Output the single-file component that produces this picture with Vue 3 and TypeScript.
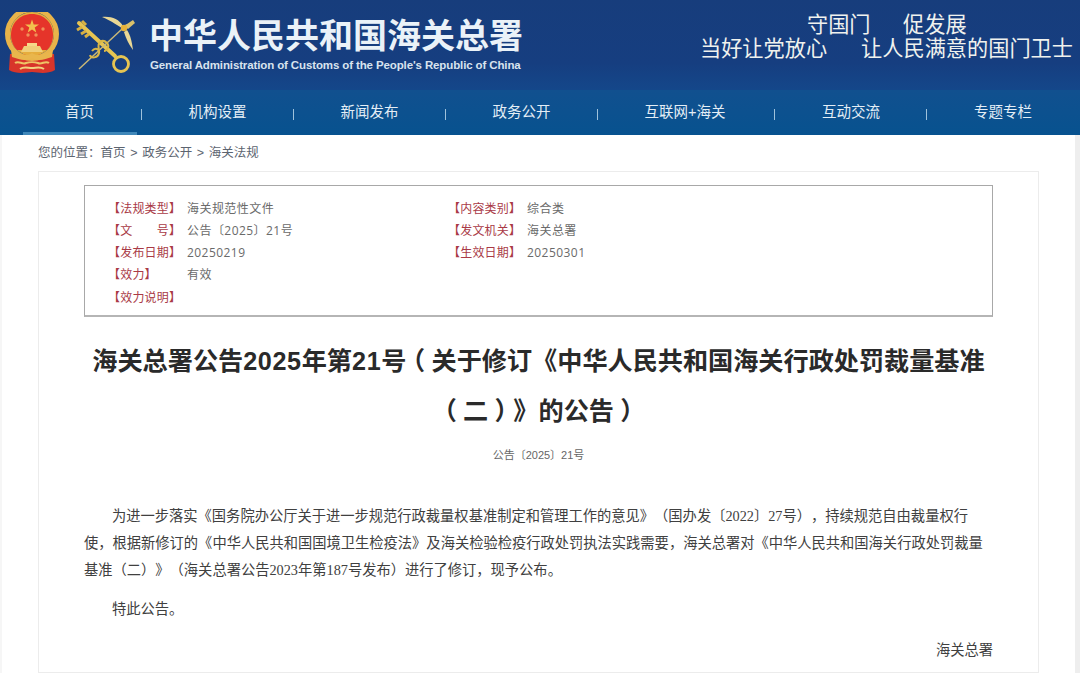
<script setup lang="ts">
const navItems: string[] = ['首页', '机构设置', '新闻发布', '政务公开', '互联网+海关', '互动交流', '专题专栏']
const metaLeft = [
  ['【法规类型】', '海关规范性文件'],
  ['【文　　号】', '公告〔2025〕21号'],
  ['【发布日期】', '20250219'],
  ['【效力】', '有效'],
  ['【效力说明】', ''],
]
const metaRight = [
  ['【内容类别】', '综合类'],
  ['【发文机关】', '海关总署'],
  ['【生效日期】', '20250301'],
]
</script>

<template>
  <div class="page">
    <header class="masthead">
      <svg class="emblem" width="60" height="64" viewBox="3 12 60 64">
        <path d="M10 54l-1 16c7 4 15 3 23 2 8 1 16 2 23-2l-1-16z" fill="#d8352a" />
        <circle cx="32" cy="34" r="22" fill="#e6ad3c" />
        <circle cx="32" cy="34" r="24.500" fill="none" stroke="#e8b44a" stroke-width="5" />
        <path d="M32 14c12 0 21 9 21 21 0 7-3 12-6 15H17c-3-3-6-8-6-15 0-12 9-21 21-21z" fill="#e5342a" />
        <path d="M32 19.500l1.700 5h5.300l-4.300 3.100 1.600 5-4.300-3.100-4.300 3.100 1.600-5-4.300-3.100h5.300z" fill="#f2c14e" />
        <circle cx="22" cy="29" r="1.700" fill="#f0905a" />
        <circle cx="43" cy="29" r="1.700" fill="#f0905a" />
        <circle cx="28" cy="35" r="1.700" fill="#f0905a" />
        <circle cx="36" cy="35" r="1.700" fill="#f0905a" />
        <path d="M27 43h10v3H27z" fill="#f6d98a" />
        <path d="M24 46h16l3 6H21z" fill="#f0cf7a" />
        <path d="M11 50c7 3 13 8 21 3 8 5 14 0 21-3l-1 7c-7 2-13 5-20 1-7 4-13 1-20-1z" fill="#e9b64c" />
        <path d="M15 63c4-3 7 2 11 0 3-1 9-1 12 0 4 2 7-3 11 0" fill="none" stroke="#eec566" stroke-width="2" />
        <path d="M20 69c4-3 8-1 12-1s8-2 12 1" fill="none" stroke="#f2d27f" stroke-width="2" />
      </svg>
      <svg class="badge" width="60" height="60" viewBox="75 15 60 60">
        <path d="M79 23l36 33" stroke="#e6c452" stroke-width="4" stroke-linecap="round" />
        <path d="M77 30l5-3M81 34l5-3M85 37l4-3M82 21l4 4" stroke="#d6b043" stroke-width="3" />
        <circle cx="121" cy="64" r="7.500" fill="none" stroke="#e6c452" stroke-width="2.800" />
        <path d="M79 69L122 29" stroke="#c9b878" stroke-width="1.500" />
        <path d="M92 51c3-4 8-2 7 2-1 5-8 6-9 2M99 49c-2-6 3-11 8-6 3 3 0 8-3 8" fill="none" stroke="#d9b748" stroke-width="2" />
        <path d="M102 17c9-1 17 2 21 9l4-2-3 5c-6-3-12-8-22-12z" fill="#e9d795" />
        <path d="M127 30c4 6 5 13 6 20-3-4-7-11-9-18z" fill="#e9d795" />
        <path d="M124 26l9-6 2 3-7 6z" fill="#d9c06a" />
        <circle cx="124" cy="28" r="3.200" fill="#e6b23a" />
      </svg>
      <div class="brand">
        <div class="brand-cn">中华人民共和国海关总署</div>
        <div class="brand-en">General Administration of Customs of the People's Republic of China</div>
      </div>
      <div class="slogan">
        <div class="slogan-top"><span>守国门</span><span>促发展</span></div>
        <div class="slogan-bottom"><span>当好让党放心</span><span>让人民满意的国门卫士</span></div>
      </div>
    </header>

    <nav class="nav">
      <template v-for="(item, i) in navItems" :key="item">
        <span v-if="i > 0" class="sep"></span>
        <a class="nav-item" :class="{ active: i === 0, wide: item.length > 4 }">{{ item }}</a>
      </template>
    </nav>

    <div class="content">
      <div class="crumbs">您的位置：首页 &gt; 政务公开 &gt; 海关法规</div>

      <main class="sheet">
        <section class="meta">
          <div class="meta-col">
            <div v-for="row in metaLeft" :key="row[0]" class="meta-row">
              <span class="meta-key">{{ row[0] }}</span><span class="meta-val">{{ row[1] }}</span>
            </div>
          </div>
          <div class="meta-col">
            <div v-for="row in metaRight" :key="row[0]" class="meta-row">
              <span class="meta-key">{{ row[0] }}</span><span class="meta-val">{{ row[1] }}</span>
            </div>
          </div>
        </section>

        <h1 class="title">海关总署公告<span class="digits">2025</span>年第<span class="digits">21</span>号<span class="paren">（</span>关于修订《中华人民共和国海关行政处罚裁量基准<span class="paren">（</span>二<span class="paren">）</span>》的公告<span class="paren">）</span></h1>
        <div class="docno">公告〔2025〕21号</div>

        <p class="para">为进一步落实《国务院办公厅关于进一步规范行政裁量权基准制定和管理工作的意见》（国办发〔2022〕27号），持续规范自由裁量权行使，根据新修订的《中华人民共和国国境卫生检疫法》及海关检验检疫行政处罚执法实践需要，海关总署对《中华人民共和国海关行政处罚裁量基准（二）》（海关总署公告2023年第187号发布）进行了修订，现予公布。</p>
        <p class="para">特此公告。</p>
        <p class="sign">海关总署</p>
      </main>
    </div>
  </div>
</template>

<style>
html, body { margin: 0; background: #fff; }
</style>

<style scoped>
.page {
  width: 1080px;
  height: 673px;
  overflow: hidden;
  font-family: "Liberation Sans", "Noto Sans CJK SC", sans-serif;
  background: #fff;
  text-spacing-trim: space-all;
  text-autospace: no-autospace;
}
.masthead {
  height: 90px;
  box-sizing: border-box;
  padding: 12px 7px 0 3px;
  display: flex;
  align-items: flex-start;
  background: linear-gradient(#173d7c, #163e80 70%, #14478a);
}
.emblem { flex: none; }
.badge { flex: none; margin: 3px 0 0 12px; }
.brand { margin-left: 14px; }
.brand-cn {
  font-family: "Noto Sans CJK SC", serif;
  font-size: 34px;
  line-height: 44px;
  font-weight: 700;
  color: #eaf2f8;
  white-space: nowrap;
}
.brand-en {
  margin-top: 1px;
  padding-left: 1px;
  font-size: 11.500px;
  line-height: 16px;
  font-weight: 700;
  letter-spacing: -0.120px;
  color: #d9e3ee;
  white-space: nowrap;
}
.slogan {
  margin: 1px 0 0 auto;
  color: #f0f2ee;
  font-size: 21.200px;
  line-height: 24px;
  white-space: nowrap;
}
.slogan-top { display: flex; gap: 32.500px; padding-left: 107px; }
.slogan-bottom { display: flex; gap: 34px; }
.nav {
  height: 45px;
  display: flex;
  align-items: center;
  padding-left: 23px;
  background: linear-gradient(#11508f, #07528f);
}
.nav-item {
  flex: none;
  height: 45px;
  box-sizing: border-box;
  padding: 0 43.500px;
  line-height: 45px;
  text-align: center;
  font-size: 14.500px;
  color: #e4eef6;
  white-space: nowrap;
}
.nav-item.active { padding: 0 43px 0 42px; margin-right: 1px; border-bottom: 3px solid #3f87b9; }
.nav-item.wide { padding-right: 46px; }
.sep { flex: none; width: 1px; height: 11px; margin: 3px 3px 0; background: #9fc2dc; }
.content {
  border-left: 2px solid #f6f6f6;
  border-right: 5px solid #eeeeee;
}
.crumbs {
  height: 36px;
  padding-left: 36px;
  line-height: 36px;
  font-size: 12.500px;
  word-spacing: 1.200px;
  color: #5c6470;
}
.sheet {
  margin: 0 36px;
  height: 502px;
  box-sizing: border-box;
  padding: 13px 45px 0;
  border: 1px solid #ececec;
  background: #fff;
}
.meta {
  height: 132px;
  box-sizing: border-box;
  padding: 11.500px 0 0 23px;
  display: flex;
  border: 1px solid #a8a8a8;
  border-bottom: 2px solid #b5b5b5;
}
.meta-col { width: 340px; }
.meta-row {
  display: flex;
  height: 22.300px;
  line-height: 22.300px;
  font-size: 12px;
}
.meta-key { width: 79px; letter-spacing: 0.200px; color: #a93a46; white-space: nowrap; }
.meta-val {
  font-family: "Open Sans", "Noto Sans CJK SC", sans-serif;
  letter-spacing: 0.450px;
  color: #6a6a6a;
  white-space: nowrap;
}
.title {
  margin: 19px 0 0;
  font-size: 25.150px;
  line-height: 50px;
  font-weight: 700;
  text-align: center;
  color: #2a2a2a;
}
.digits { letter-spacing: 0.650px; }
.paren {
  display: inline-block;
  width: 1em;
  text-align: center;
  font-feature-settings: "halt";
}
.docno {
  margin-top: 11px;
  font-size: 11px;
  line-height: 16px;
  text-align: center;
  color: #666;
}
.para {
  margin: 0 0 12px;
  font-family: "Liberation Serif", "Noto Sans CJK SC", serif;
  font-size: 14.280px;
  line-height: 27px;
  text-indent: 28px;
  color: #404040;
}
.docno + .para { margin-top: 40px; }
.sign {
  margin: 14px 0 0;
  text-align: right;
  font-size: 14.280px;
  line-height: 27px;
  color: #404040;
}
</style>
